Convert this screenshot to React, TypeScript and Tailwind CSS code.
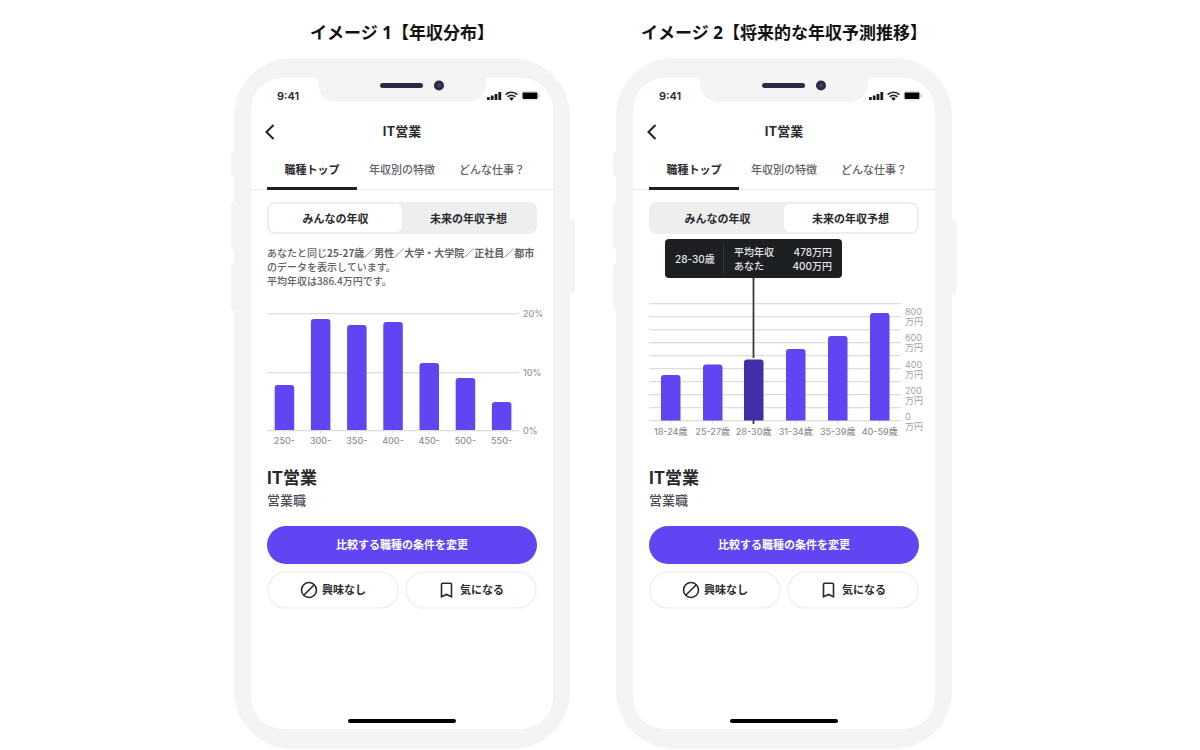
import { useId } from 'react';

const FONT = "font-['Inter','Noto_Sans_CJK_JP',sans-serif]";

function StatusIcons() {
  return (
    <svg width="54" height="12" viewBox="0 0 54 12" aria-hidden="true">
      <g fill="#1b1b1d">
        <rect x="0" y="7" width="2.8" height="3" rx="0.6" />
        <rect x="3.8" y="5.500" width="2.8" height="4.500" rx="0.6" />
        <rect x="7.600" y="4" width="2.8" height="6" rx="0.6" />
        <rect x="11.400" y="2" width="2.8" height="8" rx="0.6" />
        <path d="M24.500 10.800 22.300 8.500a3 3 0 0 1 4.400 0Z" />
      </g>
      <g fill="none" stroke="#2a2a2c" strokeWidth="1.700">
        <path d="M18.600 4.600a8.600 8.600 0 0 1 11.800 0" />
        <path d="M20.600 6.900a5.700 5.700 0 0 1 7.800 0" />
      </g>
      <rect x="35" y="1.500" width="16" height="8.600" rx="2" fill="none" stroke="#cfcfcf" strokeWidth="0.8" />
      <rect x="35.600" y="2.500" width="14.800" height="6.600" rx="1" fill="#000" />
      <path d="M52.400 4.600v2.400" stroke="#bdbdbd" strokeWidth="1" />
    </svg>
  );
}

function Notch() {
  return (
    <div className="absolute inset-x-0 top-0 flex justify-center">
      <svg width="176" height="26" viewBox="0 0 176 26" aria-hidden="true">
        <path d="M0 0h176c-3 0-4 2-4 5 0 12-8 19-19 19H23C12 24 4 17 4 5 4 2 3 0 0 0Z" fill="#f4f4f4" />
        <rect x="66" y="5" width="43" height="5" rx="2.500" fill="#2c2848" />
        <circle cx="125" cy="7.500" r="5" fill="#2c2848" />
        <circle cx="125" cy="7.500" r="2" fill="#454070" />
      </svg>
    </div>
  );
}

function DistributionChart() {
  const bars = [
    { label: '250-', top: 77 },
    { label: '300-', top: 11 },
    { label: '350-', top: 17 },
    { label: '400-', top: 14 },
    { label: '450-', top: 55 },
    { label: '500-', top: 70 },
    { label: '550-', top: 94 },
  ];
  const grid = [
    { y: 5, label: '20%' },
    { y: 64, label: '10%' },
    { y: 122, label: '0%' },
  ];
  return (
    <svg width="280" height="142" viewBox="0 0 280 142" role="img" aria-label="年収分布" className="overflow-visible">
      {grid.map((g) => (
        <g key={g.label}>
          <rect x="0" y={g.y} width="252" height="1.300" fill="#dedede" />
          <text x="256" y={g.y + 4} fontSize="9" fontWeight="500" fill="#999">{g.label}</text>
        </g>
      ))}
      {bars.map((b, i) => {
        const x = 7.700 + i * 36.200;
        return (
          <g key={b.label}>
            <path d={`M${x + 9.700} 122v4`} stroke="#dedede" />
            <path d={`M${x} 122V${b.top + 3}q0-3 3-3h13.500q3 0 3 3V122Z`} fill="#6144f2" />
            <text x={x + 9.700} y="136" textAnchor="middle" fontSize="9" fontWeight="500" fill="#8f8f8f">{b.label}</text>
          </g>
        );
      })}
    </svg>
  );
}

function ForecastChart() {
  const bars = [
    { label: '18-24歳', x: 12, top: 136 },
    { label: '25-27歳', x: 54, top: 125.500 },
    { label: '28-30歳', x: 95, top: 120.500, active: true },
    { label: '31-34歳', x: 137, top: 110 },
    { label: '35-39歳', x: 179, top: 97 },
    { label: '40-59歳', x: 221, top: 74 },
  ];
  const lines = [64, 77, 90, 103, 116, 129, 142, 155, 168, 181];
  const units = [
    { label: '800', y: 76 },
    { label: '600', y: 102 },
    { label: '400', y: 129 },
    { label: '200', y: 155 },
    { label: '0', y: 180.500 },
  ];
  return (
    <div className="relative">
      <svg width="280" height="200" viewBox="0 0 280 200" role="img" aria-label="将来的な年収予測推移" className="overflow-visible">
        {lines.map((y) => (
          <rect key={y} x="0" y={y} width="252" height="1.300" fill="#dedede" />
        ))}
        {units.map((u) => (
          <g key={u.label} fontSize="9" fill="#a3a3a3">
            <text x="256" y={u.y}>{u.label}</text>
            <text x="256" y={u.y + 10}>万円</text>
          </g>
        ))}
        <path d="M104.500 37V119M104.500 181v4" stroke="#3a3a3e" strokeWidth="1.800" />
        {bars.map((b) => (
          <g key={b.label}>
            {!b.active && <path d={`M${b.x + 9.700} 181v4`} stroke="#dedede" />}
            <path d={`M${b.x} 181.500V${b.top + 3}q0-3 3-3h13.500q3 0 3 3V181.500Z`} fill={b.active ? '#432da8' : '#6144f2'} />
            <text x={b.x + 9.700} y="196" textAnchor="middle" fontSize="9" fontWeight="500" fill="#8f8f8f">{b.label}</text>
          </g>
        ))}
      </svg>
      <div className="absolute left-4 top-0 flex h-[39px] w-[177px] items-center rounded bg-[#1e1f22] px-[10px] text-[10px] leading-[14px] font-medium text-[#e4e4e4]">
        <span className="w-12">28-30歳</span>
        <dl className="grid grow grid-cols-2 border-l border-[#303136] pl-[10px]">
          <dt>平均年収</dt>
          <dd className="text-right">478万円</dd>
          <dt>あなた</dt>
          <dd className="text-right">400万円</dd>
        </dl>
      </div>
    </div>
  );
}

function Phone({ forecast = false }: { forecast?: boolean }) {
  const id = useId();
  const segment = 'flex-1 rounded-md pt-[2px] text-[11px] font-bold text-[#2a2a2d]';
  return (
    <div className="relative rounded-[58px] bg-[#f4f4f4] px-[17px] py-5">
      <i className="absolute -left-[3px] top-[94px] h-6 w-[3px] rounded-l-sm bg-[#f4f4f4]" />
      <i className="absolute -left-[3px] top-[144px] h-[47px] w-[3px] rounded-l-sm bg-[#f4f4f4]" />
      <i className="absolute -left-[3px] top-[206px] h-[47px] w-[3px] rounded-l-sm bg-[#f4f4f4]" />
      <i className="absolute -right-[5px] top-[162px] h-[74px] w-[5px] rounded-r-sm bg-[#f4f4f4]" />
      <div className="relative flex h-[651px] flex-col rounded-[32px] bg-white">
        <Notch />
        <div className="flex h-9 items-center justify-between pl-[26px] pr-3 text-[11px] font-semibold text-[#2a2a2d]">
          <span>9:41</span>
          <StatusIcons />
        </div>
        <header className="grid h-9 grid-cols-3 items-center px-[14px]">
          <button type="button" aria-label="戻る" className="w-3">
            <svg width="10" height="16" viewBox="0 0 10 16" fill="none" stroke="#1d1d20" strokeWidth="2" aria-hidden="true">
              <path d="M8.500 1 1.500 8l7 7" />
            </svg>
          </button>
          <h2 className="text-center text-[13px] font-bold text-[#2a2a2d]">IT営業</h2>
        </header>
        <nav className="flex h-10 border-b border-[#ececec] px-4 text-[11px] font-medium text-[#5f6266]">
          <a href="#top" className="-mb-px flex h-10 w-[90px] items-center justify-center border-b-[3px] border-[#1e1f22] pt-1 font-bold text-[#2a2a2d]">職種トップ</a>
          <a href="#feature" className="flex w-[90px] items-center justify-center pt-[2px]">年収別の特徴</a>
          <a href="#work" className="flex w-[90px] items-center justify-center whitespace-nowrap pt-[2px]">どんな仕事？</a>
        </nav>
        <main className="flex grow flex-col px-4 pt-3">
          <div className="flex h-8 rounded-lg bg-[#eeeeef] p-[2px]">
            <button type="button" aria-pressed={!forecast} className={forecast ? segment : `${segment} bg-white`}>みんなの年収</button>
            <button type="button" aria-pressed={forecast} className={forecast ? `${segment} bg-white` : segment}>未来の年収予想</button>
          </div>
          <div className="h-[224px]">
            {forecast ? (
              <div className="pt-[5px]">
                <ForecastChart />
              </div>
            ) : (
              <>
                <p className="mb-5 whitespace-nowrap pt-3 font-['Noto_Sans_CJK_JP',sans-serif] text-[10px] leading-[14px] font-medium text-[#5f6266]">
                  あなたと同じ<b>25-27歳／男性／大学・大学院／正社員／都市</b>
                  <br />
                  のデータを表示しています。
                  <br />
                  平均年収は386.4万円です。
                </p>
                <DistributionChart />
              </>
            )}
          </div>
          <h3 id={id} className="mt-2 text-[17px] leading-6 font-bold text-[#2a2a2d]">IT営業</h3>
          <p className="text-[13px] leading-5 font-medium text-[#4b4d52]">営業職</p>
          <button type="button" aria-describedby={id} className="mt-4 h-[38px] shrink-0 rounded-full bg-[#6144f2] text-[11px] font-bold text-white">比較する職種の条件を変更</button>
          <div className="mt-[7px] flex gap-[6px] text-[11px] font-bold text-[#2a2a2d]">
            <button type="button" className="flex h-[38px] flex-1 items-center justify-center gap-1 rounded-full border-2 border-[#f3f3f3]">
              <svg width="18" height="18" viewBox="0 0 18 18" fill="none" stroke="currentColor" strokeWidth="1.600" aria-hidden="true">
                <circle cx="9" cy="9" r="7.500" />
                <path d="m3.700 14.300 10.600-10.600" />
              </svg>
              興味なし
            </button>
            <button type="button" className="flex h-[38px] flex-1 items-center justify-center gap-1 rounded-full border-2 border-[#f3f3f3]">
              <svg width="18" height="18" viewBox="0 0 18 18" fill="none" stroke="currentColor" strokeWidth="1.600" aria-hidden="true">
                <path d="M3.500 3.500q0-1.200 1.200-1.200h7.600q1.200 0 1.200 1.200v12.200l-5-2.300-5 2.300Z" />
              </svg>
              気になる
            </button>
          </div>
          <div className="mx-auto mt-auto mb-[6px] h-1 w-[108px] rounded-full bg-black" />
        </main>
      </div>
    </div>
  );
}

export default function App() {
  const heading = "flex h-[58px] items-center justify-center whitespace-nowrap pt-2 font-['Open_Sans','Noto_Sans_CJK_JP',sans-serif] text-[17px] font-bold text-[#111]";
  return (
    <div className={`flex min-h-screen justify-center gap-[46px] bg-white pr-[14px] ${FONT}`}>
      <section className="w-[336px]">
        <h1 className={heading}>イメージ 1【年収分布】</h1>
        <Phone />
      </section>
      <section className="w-[336px]">
        <h1 className={heading}>イメージ 2【将来的な年収予測推移】</h1>
        <Phone forecast />
      </section>
    </div>
  );
}
